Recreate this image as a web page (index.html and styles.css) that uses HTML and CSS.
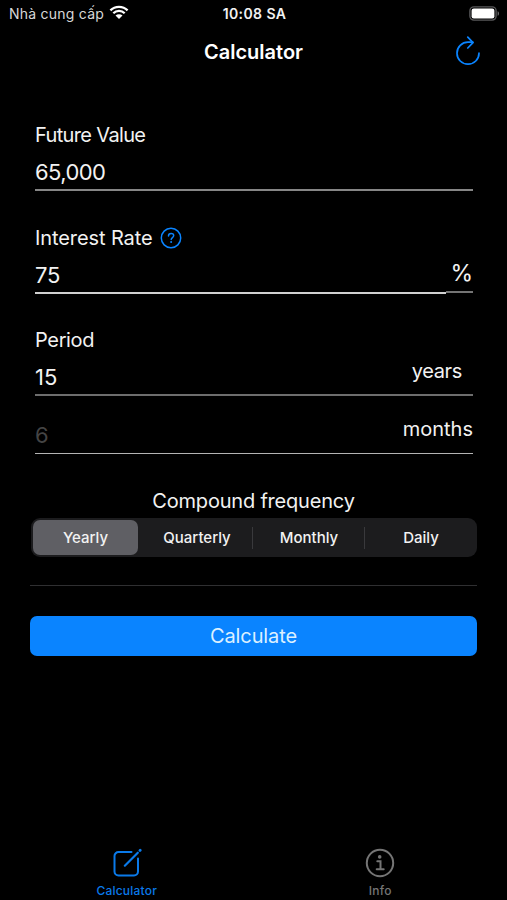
FILE: index.html
```html
<!DOCTYPE html>
<html lang="vi">
	<head>
		<meta charset="UTF-8">
		<title>Calculator</title>
		<meta name="viewport" content="width=device-width,initial-scale=1" />
		<link rel="stylesheet" href="styles.css">
	</head>
	<body>
		<div class="app">
			<div class="status">
				<div class="carrier">
					<span>Nhà cung cấp</span>
					<svg class="wifi" width="20" height="15" viewBox="0 0 20 15">
						<path d="M1.4 5.4a12.2 12.2 0 0 1 17.200 0M4.300 8.300a8.100 8.100 0 0 1 11.400 0" fill="none" stroke="#fff" stroke-width="2.3"/>
						<path d="M6.5 10.6a5 5 0 0 1 7 0L10 14.1z" fill="#fff"/>
					</svg>
				</div>
				<span class="clock">10:08 SA</span>
				<svg class="battery" width="31" height="15" viewBox="0 0 31 15">
					<rect x=".9" y=".9" width="26.2" height="13.2" rx="4" fill="none" stroke="#58585a" stroke-width="1.4"/>
					<rect x="2.6" y="2.6" width="22.8" height="9.8" rx="2.2" fill="#fff"/>
					<path d="M28.6 5.2c1.9.7 1.9 3.900 0 4.600z" fill="#6c6c6e"/>
				</svg>
			</div>
			<header>
				<h1>Calculator</h1>
				<svg class="reload" width="26" height="30" viewBox="0 0 26 30" fill="none" stroke="#0a84ff" stroke-width="1.7" stroke-linecap="round" stroke-linejoin="round">
					<path d="M24 17.2A11 11 0 1 1 13 6.2h4.8"/>
					<path d="M12.8 1.2l5.2 5.4-5.2 5.4"/>
				</svg>
			</header>
			<section>
				<div class="field">
					<label class="future">Future Value</label>
					<div class="value amount"><span class="num">65,000</span></div>
				</div>
				<div class="field">
					<label>Interest Rate
						<svg class="help" width="22" height="22" viewBox="0 0 22 22" fill="none" stroke="#0a84ff">
							<circle cx="11" cy="11" r="9.7" stroke-width="1.5"/>
							<path d="M8.5 8.9c0-3.3 5.2-3.2 5.2-.3 0 2-2.5 1.9-2.5 3.9" stroke-width="1.5" stroke-linecap="round"/>
							<circle cx="11.1" cy="15" r="1" fill="#0a84ff" stroke="none"/>
						</svg>
					</label>
					<div class="value rate"><span class="num">75</span><span class="unit">%</span></div>
				</div>
				<div class="field">
					<label class="period">Period</label>
					<div class="value years"><span class="num">15</span><span class="unit">years</span></div>
					<div class="value months"><span class="num hint">6</span><span class="unit">months</span></div>
				</div>
				<h2>Compound frequency</h2>
				<div class="segment">
					<div class="seg on"><span>Yearly</span></div>
					<div class="seg"><span>Quarterly</span></div>
					<div class="seg line"><span>Monthly</span></div>
					<div class="seg line"><span>Daily</span></div>
				</div>
				<hr>
				<button class="calc">Calculate</button>
			</section>
			<footer>
				<div class="tab active">
					<svg width="30" height="30" viewBox="0 0 30 30" fill="none" stroke="#0a7aea" stroke-linecap="round">
						<path d="M19.500 4H6.500a4 4 0 0 0-4 4v15.500a4 4 0 0 0 4 4h15.500a4 4 0 0 0 4-4V10.500" stroke-width="2"/>
						<path d="M12.800 17.700L25.800 4.700" stroke-width="2.200"/>
						<path d="M28 2.400l.2-.2" stroke-width="2.800"/>
					</svg>
					<span>Calculator</span>
				</div>
				<div class="tab">
					<svg width="30" height="30" viewBox="0 0 30 30" fill="none" stroke="#757575">
						<circle cx="15" cy="15" r="13.2" stroke-width="2"/>
						<circle cx="14.700" cy="8.900" r="1.800" fill="#757575" stroke="none"/>
						<path d="M12.300 13.300h3.200v7.800M11.700 21.300h7" stroke-width="2" stroke-linecap="round"/>
					</svg>
					<span>Info</span>
				</div>
			</footer>
		</div>
	</body>
</html>
```
FILE: styles.css
```css
*{
	margin: 0;
	padding: 0;
	box-sizing: border-box;
}
body{
	background: #000;
	color: #f2f2f2;
	font-family: Inter, "Noto Sans", sans-serif;
}
.app{
	height: 900px;
	width: 507px;
	display: flex;
	flex-direction: column;
	overflow: hidden;
}
.status{
	height: 27px;
	padding: 0 7px 0 9px;
	display: grid;
	grid-template-columns: 1fr auto 1fr;
	align-items: center;
	font-size: 14px;
}
.carrier{
	display: flex;
	align-items: center;
	gap: 5px;
	color: #d8d8d8;
	letter-spacing: 0.23px;
}
.wifi{
	margin-top: -2px;
}
.clock{
	font-weight: 600;
	letter-spacing: 0.4px;
}
.battery{
	justify-self: end;
	margin-top: -1px;
}
header{
	height: 50px;
	padding: 0 26px;
	display: grid;
	grid-template-columns: 1fr auto 1fr;
	align-items: center;
}
header h1{
	grid-column: 2;
	font-size: 20px;
	font-weight: 600;
	color: #fff;
}
.reload{
	justify-self: end;
	margin-top: -2px;
}

section{
	flex: 1;
	padding: 44px 30px 0;
}
.field{
	margin: 0 4px 33px 5px;
}
.field label{
	height: 28px;
	display: flex;
	align-items: center;
	gap: 7px;
	font-size: 20px;
	letter-spacing: -0.1px;
}
.field .future{
	letter-spacing: -0.65px;
}
.field .period{
	letter-spacing: -0.35px;
}
.value{
	height: 42px;
	display: flex;
	justify-content: space-between;
	line-height: 30px;
	font-size: 22px;
	letter-spacing: -0.6px;
}
.num{
	flex: 1;
	padding-top: 8px;
}
.unit{
	font-size: 20px;
	letter-spacing: 0;
}
.amount{
	border-bottom: 2px solid #868686;
}
.rate{
	margin-bottom: -1px;
	letter-spacing: -0.3px;
}
.rate .num{
	border-bottom: 2px solid #d0d0d0;
}
.rate .unit{
	width: 27px;
	height: 41px;
	padding-top: 6px;
	border-bottom: 2px solid #747474;
	font-size: 23px;
	text-align: right;
}
.years{
	letter-spacing: 0;
	border-bottom: 2px solid #6d6d6d;
}
.years .unit{
	padding: 2px 11px 0 0;
	letter-spacing: -0.35px;
}
.months{
	height: 58px;
	border-bottom: 1px solid #b4b4b4;
}
.months .num{
	padding-top: 24px;
}
.months .unit{
	padding-top: 18px;
}
.hint{
	color: #444;
}
h2{
	height: 31px;
	font-size: 20px;
	font-weight: 400;
	text-align: center;
	line-height: 28px;
	letter-spacing: -0.2px;
}
.segment{
	height: 39px;
	display: flex;
	margin-left: 1px;
	padding: 2px 0 2px 2px;
	border-radius: 9px;
	background: #1c1c1e;
}
.seg{
	width: 112px;
	display: flex;
	align-items: center;
	justify-content: center;
	font-size: 15px;
	font-weight: 500;
}
.seg span{
	flex: 1;
	text-align: center;
}
.line span{
	margin-left: -1px;
	border-left: 1px solid #39393c;
	line-height: 22px;
}
.on{
	width: 105px;
	margin-right: 3px;
	border-radius: 7px;
	background: #5f5f64;
}
hr{
	border: 0;
	height: 1px;
	background: #2f2f31;
	margin: 28px 0 30px;
}
.calc{
	display: block;
	width: 100%;
	height: 40px;
	border: 0;
	border-radius: 7px;
	background: #0a84ff;
	color: #dcf0ff;
	font-family: inherit;
	font-size: 20px;
	letter-spacing: -0.1px;
}
footer{
	height: 52px;
	display: flex;
}
.tab{
	flex: 1;
	display: flex;
	flex-direction: column;
	align-items: center;
	font-size: 12px;
	font-weight: 500;
	color: #757575;
	line-height: 14px;
	letter-spacing: 0.2px;
}
.tab span{
	margin-top: 6px;
}
.active{
	color: #0a7aea;
}
```
